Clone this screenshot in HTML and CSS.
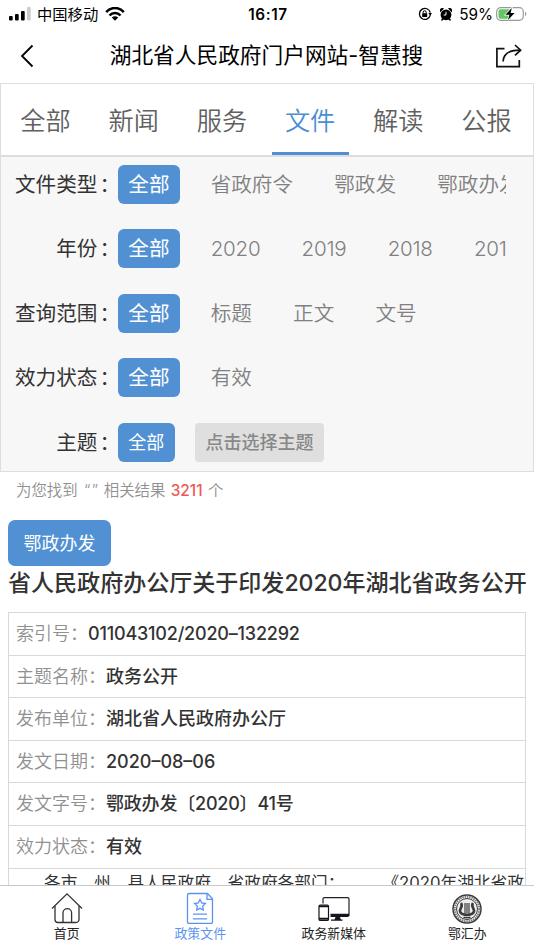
FILE: index.html
```
<!DOCTYPE html>
<html lang="zh-CN">
  <head>
    <meta charset="utf-8">
    <link rel="stylesheet" href="styles.css">
    <title>湖北省人民政府门户网站-智慧搜</title>
  </head>
  <body>
    <div class="status">
      <div class="status-left">
        <svg width="22" height="14" viewBox="0 0 22 14">
          <rect x="0" y="9" width="3.7" height="4.5" rx="1"/>
          <rect x="6" y="7" width="3.7" height="6.5" rx="1"/>
          <rect x="12" y="4" width="3.7" height="9.5" rx="1"/>
          <rect x="18" y="0" width="3.7" height="13.5" rx="1" fill="#ccc"/>
        </svg>
        <span class="carrier">中国移动</span>
        <svg width="20" height="14" viewBox="0 0 20 14">
          <g fill="none" stroke="#000" stroke-width="2.6">
            <path d="M1.2 5.1C6-0.3 14-0.3 18.8 5.1"/>
            <path d="M4.5 8.5c3-3.3 8-3.3 11 0"/>
          </g>
          <path d="M6.8 10.6c1.8-1.8 4.6-1.8 6.4 0L10 13.8z"/>
        </svg>
      </div>
      <div class="clock">16:17</div>
      <div class="status-right">
        <svg width="14" height="14" viewBox="0 0 14 14">
          <path d="M12.3 8.2A5.5 5.5 0 1 1 12.3 5.6" fill="none" stroke="#000" stroke-width="1.3"/>
          <path d="M10.4 6.1h3.6l-1.8 2.6z"/>
          <rect x="4.2" y="6.2" width="5" height="3.8" rx=".5"/>
          <path d="M5.2 6.5V5.2a1.5 1.5 0 0 1 3 0v1.3" fill="none" stroke="#000"/>
        </svg>
        <svg class="alarm" width="12" height="13" viewBox="0 0 12 13">
          <circle cx="6" cy="6.8" r="5.4"/>
          <path d="M.3 4.2A2.6 2.6 0 0 1 4 .6zM11.7 4.2A2.6 2.6 0 0 0 8 .6zM2 10l-1 2.2 1.2.5 1.8-1.5zM10 10l1 2.2-1.2.5L8 11.2z"/>
          <path d="M6 3.8V7H3.6" fill="none" stroke="#fff"/>
        </svg>
        <span class="percent">59%</span>
        <svg width="31" height="14" viewBox="0 0 31 14">
          <rect x=".7" y=".7" width="26.6" height="12.6" rx="4" fill="#fff" stroke="#999" stroke-width="1.2"/>
          <path d="M4.5 2.3H15v9.4H4.5a2 2 0 0 1-2-2V4.3a2 2 0 0 1 2-2z" fill="#65c466"/>
          <path d="M29 4.8c1.8.8 1.8 3.6 0 4.4z" fill="#999"/>
          <path d="M15.8 1L9.4 7.8h4L12 13l6.6-7h-4z" stroke="#fff" stroke-width="1.4" paint-order="stroke"/>
        </svg>
      </div>
    </div>

    <div class="navbar">
      <svg width="14" height="24" viewBox="0 0 14 24">
        <path d="M12.5 1.5L2 12l10.5 10.5" fill="none" stroke="#000" stroke-width="1.8"/>
      </svg>
      <div class="title">湖北省人民政府门户网站-智慧搜</div>
      <svg class="share" width="28" height="24" viewBox="0 0 28 24">
        <g fill="none" stroke="#111" stroke-width="1.7">
          <path d="M9.5 4.6H1.9V22.6H24.3V16"/>
          <path d="M8.1 17.5C8.5 10.5 12.5 6.2 25 6.2"/>
          <path d="M20 1l5.6 5.2-5.6 5.2"/>
        </g>
      </svg>
    </div>

    <div class="tabs">
      <a>全部</a>
      <a>新闻</a>
      <a>服务</a>
      <a class="on">文件</a>
      <a>解读</a>
      <a>公报</a>
    </div>

    <div class="filters">
      <div class="row">
        <label>文件类型<i>：</i></label>
        <div class="options"><span class="on">全部</span><span>省政府令</span><span>鄂政发</span><span>鄂政办发</span></div>
      </div>
      <div class="row">
        <label>年份<i>：</i></label>
        <div class="options years"><span class="on">全部</span><span>2020</span><span>2019</span><span>2018</span><span>2017</span></div>
      </div>
      <div class="row">
        <label>查询范围<i>：</i></label>
        <div class="options"><span class="on">全部</span><span>标题</span><span>正文</span><span>文号</span></div>
      </div>
      <div class="row">
        <label>效力状态<i>：</i></label>
        <div class="options"><span class="on">全部</span><span>有效</span></div>
      </div>
      <div class="row">
        <label>主题<i>：</i></label>
        <div class="options small"><span class="on">全部</span><span class="pick">点击选择主题</span></div>
      </div>
    </div>

    <div class="results">
      <p class="count">为您找到 <span class="quote">“”</span> 相关结果 <b>3211</b> 个</p>
      <div class="tag">鄂政办发</div>
      <h2>省人民政府办公厅关于印发2020年湖北省政务公开</h2>
      <div class="info">
        <div class="line number"><span>索引号：</span>011043102/2020–132292</div>
        <div class="line"><span>主题名称：</span>政务公开</div>
        <div class="line"><span>发布单位：</span>湖北省人民政府办公厅</div>
        <div class="line"><span>发文日期：</span>2020–08–06</div>
        <div class="line number"><span>发文字号：</span>鄂政办发〔2020〕41号</div>
        <div class="line"><span>效力状态：</span>有效</div>
        <div class="summary"><span>各市、州、县人民政府，省政府各部门：</span><span>《2020年湖北省政</span></div>
      </div>
    </div>

    <div class="tabbar">
      <a>
        <svg width="32" height="32" viewBox="0 0 32 32" fill="none" stroke="#333" stroke-width="1.3">
          <path d="M1 16.5L16 1.8 31 16.5"/>
          <path d="M4 14v13.5a3 3 0 0 0 3 3h18a3 3 0 0 0 3-3V14"/>
          <path d="M12 30.5V21a4.3 4.3 0 0 1 8.600 0v9.5"/>
        </svg>
        首页
      </a>
      <a class="on">
        <svg width="32" height="32" viewBox="0 0 32 32" fill="none" stroke="#5b93f0" stroke-width="1.3">
          <path d="M23.5 1.5H5A1.5 1.5 0 0 0 3.500 3v27A1.5 1.5 0 0 0 5 31.5h22a1.5 1.5 0 0 0 1.5-1.5V6.8z"/>
          <path d="M23 1.5v5.8h5.5"/>
          <path d="M16 7.500l1.700 3.400 3.700.6-2.700 2.700.6 3.800-3.300-1.700-3.300 1.700.6-3.800-2.700-2.700 3.700-.6z"/>
          <path d="M9 22.2h14M9 26.8h14"/>
        </svg>
        政策文件
      </a>
      <a>
        <svg width="32" height="32" viewBox="0 0 32 32">
          <path d="M5 11.5V7a1.3 1.3 0 0 1 1.3-1.3h23.4A1.3 1.3 0 0 1 31 7v17" fill="none" stroke="#222" stroke-width="1.2"/>
          <path d="M12.5 21.8H31v2a1.3 1.3 0 0 1-1.3 1.3H12.5zM17.5 25h4.5l.8 2.6h1.7v1.2H13v-1.2h3.5z" fill="#151520"/>
          <rect x="1" y="13" width="9.5" height="15.5" rx="1.3" fill="#fff" stroke="#151520" stroke-width="1.2"/>
          <path d="M1 14.2h9.5M1 26.8h9.5" stroke="#151520" stroke-width="2"/>
        </svg>
        政务新媒体
      </a>
      <a>
        <svg width="32" height="32" viewBox="0 0 32 32" fill="none" stroke="#3a3a3a">
          <circle cx="16" cy="17" r="14" stroke-width="1.5"/>
          <circle cx="16" cy="17" r="12.3" stroke="#777" stroke-width="2" stroke-dasharray="1.5 .8"/>
          <circle cx="16" cy="17" r="10.5" fill="#eee"/>
          <path d="M10 11c3 4-3 6-.5 9.5 2 3 11 3 13 0C25 17 19 15 22 11" stroke-width="2.6"/>
          <path d="M14 11v10M16 11v10M18 11v10" stroke-width="1.2"/>
          <path d="M12.5 25.5h7" stroke-width="1.5"/>
        </svg>
        鄂汇办
      </a>
    </div>
  </body>
</html>
```

FILE: styles.css
```
* {
  box-sizing: border-box;
}
body {
  margin: 0;
  height: 950px;
  overflow: hidden;
  display: flex;
  flex-direction: column;
  background: #fff;
  color: #333;
  font-family: Inter, "Noto Sans CJK SC", sans-serif;
}
svg {
  display: block;
  flex: none;
}

.status {
  height: 28px;
  flex: none;
  padding: 0 7px 0 9px;
  display: grid;
  grid-template-columns: 1fr auto 1fr;
  align-items: center;
  color: #000;
  font-size: 15.3px;
}
.status-left, .status-right {
  display: flex;
  align-items: center;
}
.status-right {
  justify-content: flex-end;
}
.carrier {
  margin: -2px 7px 0 6px;
}
.clock {
  font-weight: 600;
  letter-spacing: 0.6px;
}
.alarm {
  margin: 0 7px 0 8px;
}
.percent {
  margin-right: 3px;
}

.navbar {
  height: 55px;
  flex: none;
  padding: 0 11px 0 20px;
  display: flex;
  align-items: center;
  justify-content: space-between;
  color: #000;
}
.title {
  margin: -2px 0 0 4px;
  font-size: 21.7px;
  line-height: 30px;
}

.tabs {
  height: 74px;
  flex: none;
  display: flex;
  justify-content: space-between;
  padding: 0 8px 0 6px;
  border: 1px solid #ddd;
  border-bottom-width: 2px;
}
.tabs a {
  width: 77px;
  line-height: 74px;
  text-align: center;
  font-size: 25.2px;
  font-weight: 350;
  color: #606060;
}
.tabs a.on {
  color: #4a8dd3;
  height: 71px;
  border-bottom: 3px solid #5191d3;
}

.filters {
  height: 315px;
  flex: none;
  padding: 8px 27px 0 14px;
  display: flex;
  flex-direction: column;
  gap: 25.8px;
  background: #f7f7f7;
  border: 1px solid #ddd;
  border-top: 0;
}
.row {
  display: flex;
  font-size: 20.6px;
  line-height: 40px;
}
.row label {
  width: 103px;
  height: 38.7px;
  flex: none;
  display: flex;
  justify-content: flex-end;
  white-space: nowrap;
}
.row label i {
  font-style: normal;
  padding-left: 2px;
  margin-right: -2px;
}
.options {
  flex: 1;
  height: 38.7px;
  display: flex;
  gap: 20.6px;
  overflow: hidden;
  white-space: nowrap;
  color: #808080;
  font-weight: 350;
}
.options span {
  flex: none;
  height: 38.7px;
  padding: 0 10.3px;
  border-radius: 6px;
}
.options .on {
  background: #5191d3;
  color: #fff;
  font-weight: 400;
}
.years span + span {
  letter-spacing: -0.25px;
}
.small {
  font-size: 18px;
}
.options .pick {
  background: #dfdfdf;
  border-radius: 4px;
  color: #888;
  font-weight: 500;
}

.results {
  flex: 1;
  min-height: 0;
  overflow: hidden;
  padding: 0 8px;
}
.count {
  margin: 0 0 10px;
  padding-left: 8px;
  font-size: 15.4px;
  line-height: 38px;
  font-weight: 350;
  color: #909090;
}
.count b {
  margin: 0 1px;
  font-weight: 500;
  color: #ed5a54;
}
.quote {
  margin-left: 2px;
  letter-spacing: 1.5px;
}
.tag {
  width: 103px;
  height: 46px;
  line-height: 47px;
  text-align: center;
  font-size: 18px;
  color: #fff;
  background: #5191d3;
  border-radius: 7px;
}
h2 {
  margin: 0;
  height: 46px;
  line-height: 35px;
  font-size: 23.1px;
  letter-spacing: -0.06px;
  font-weight: 500;
  white-space: nowrap;
}
.info {
  border: 1px solid #d9d9d9;
}
.line {
  height: 42.6px;
  line-height: 42px;
  padding-left: 7px;
  font-size: 18px;
  font-weight: 500;
  border-bottom: 1px solid #d9d9d9;
}
.number {
  letter-spacing: -0.2px;
}
.line span {
  font-weight: 350;
  letter-spacing: 0;
  color: #909090;
}
.summary {
  display: flex;
  gap: 38px;
  padding-left: 35px;
  font-size: 16.7px;
  line-height: 29px;
  white-space: nowrap;
}

.tabbar {
  height: 65px;
  flex: none;
  display: grid;
  grid-template-columns: repeat(4, 1fr);
  border-top: 1px solid #c8c8c8;
}
.tabbar a {
  display: flex;
  flex-direction: column;
  align-items: center;
  padding-top: 6px;
  font-size: 12.9px;
  line-height: 20px;
  color: #222;
}
.tabbar a.on {
  color: #5b93f0;
}
```
